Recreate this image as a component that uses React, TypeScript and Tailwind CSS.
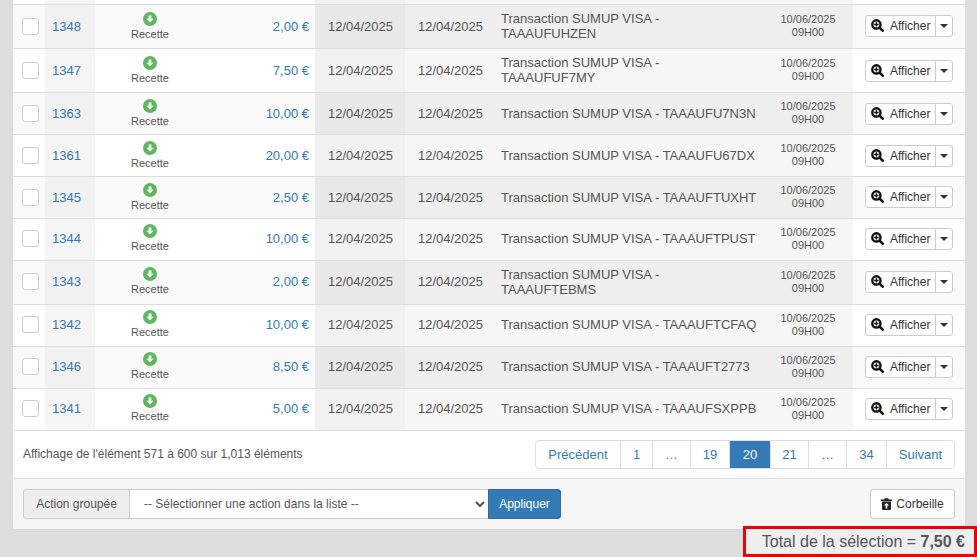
const rows = [
  { id: "1348", amount: "2,00 €", ref: "TAAAUFUHZEN", h: "h-[44px]", wrap: true },
  { id: "1347", amount: "7,50 €", ref: "TAAAUFUF7MY", h: "h-[44px]", wrap: true },
  { id: "1363", amount: "10,00 €", ref: "TAAAUFU7N3N", h: "h-[42px]", wrap: false },
  { id: "1361", amount: "20,00 €", ref: "TAAAUFU67DX", h: "h-[42px]", wrap: false },
  { id: "1345", amount: "2,50 €", ref: "TAAAUFTUXHT", h: "h-[42px]", wrap: false },
  { id: "1344", amount: "10,00 €", ref: "TAAAUFTPUST", h: "h-[42px]", wrap: false },
  { id: "1343", amount: "2,00 €", ref: "TAAAUFTEBMS", h: "h-[44px]", wrap: true },
  { id: "1342", amount: "10,00 €", ref: "TAAAUFTCFAQ", h: "h-[42px]", wrap: false },
  { id: "1346", amount: "8,50 €", ref: "TAAAUFT2773", h: "h-[42px]", wrap: false },
  { id: "1341", amount: "5,00 €", ref: "TAAAUFSXPPB", h: "h-[42px]", wrap: false },
];

const pages = [
  { t: "Précédent", w: "w-[86px]", c: "text-[#337ab7]" },
  { t: "1", w: "w-[33px]", c: "text-[#337ab7]" },
  { t: "…", w: "w-[39px]", c: "text-[#777777]" },
  { t: "19", w: "w-[40px]", c: "text-[#337ab7]" },
  { t: "20", w: "w-[42px]", c: "text-white bg-[#337ab7] border-[#337ab7]" },
  { t: "21", w: "w-[39px]", c: "text-[#337ab7]" },
  { t: "…", w: "w-[39px]", c: "text-[#777777]" },
  { t: "34", w: "w-[41px]", c: "text-[#337ab7]" },
  { t: "Suivant", w: "w-[69px]", c: "text-[#337ab7]" },
];

function SearchPlus() {
  return (
    <svg viewBox="0 0 13 13" className="h-[13px] w-[13px] shrink-0">
      <circle cx="5.4" cy="5.4" r="4.1" fill="#ffffff" stroke="#111111" strokeWidth="2.4" />
      <path d="M8.6 8.6 L11.7 11.7" stroke="#111111" strokeWidth="2.6" strokeLinecap="round" />
      <path d="M3.2 5.4 H7.6 M5.4 3.2 V7.6" stroke="#111111" strokeWidth="1.5" />
    </svg>
  );
}

function TrashUp() {
  return (
    <svg viewBox="0 0 11 12" className="h-[12px] w-[11px] shrink-0">
      <path d="M0 1.5 H3.2 L3.8 0.2 H7.2 L7.8 1.5 H11 V3 H0 Z" fill="#222222" />
      <path d="M1 3.6 H10 V11 Q10 12 9 12 H2 Q1 12 1 11 Z" fill="#222222" />
      <path d="M5.5 5 L8 7.6 H6.3 V10.4 H4.7 V7.6 H3 Z" fill="#ffffff" />
    </svg>
  );
}

function ArrowCircleDown() {
  return (
    <svg viewBox="0 0 14 14" className="mb-[2px] h-[14px] w-[14px] shrink-0">
      <circle cx="7" cy="7" r="7" fill="#5cb85c" />
      <path d="M5.6 3.4 H8.4 V6.8 H10.6 L7 10.6 L3.4 6.8 H5.6 Z" fill="#ffffff" />
    </svg>
  );
}

export default function App() {
  return (
    <div className="relative h-[557px] w-[977px] overflow-hidden bg-[#dddddd] font-['Liberation_Sans',Arial,sans-serif] text-[13px] text-[#555555]">
      <div className="ml-[13px] w-[952px] rounded-b-[3px] bg-white">
        <table className="w-[952px] table-fixed border-separate border-spacing-0">
          <colgroup>
            <col className="w-[32px]" />
            <col className="w-[50px]" />
            <col className="w-[110px]" />
            <col className="w-[110px]" />
            <col className="w-[90px]" />
            <col className="w-[90px]" />
            <col className="w-[268px]" />
            <col className="w-[90px]" />
            <col className="w-[112px]" />
          </colgroup>
          <tbody>
            <tr className="h-[5px] bg-white">
              <td className="border-b border-[#dddddd] p-0" />
              <td className="border-b border-[#dddddd] bg-[#f5f5f5] p-0" />
              <td colSpan={2} className="border-b border-[#dddddd] p-0" />
              <td className="border-b border-[#dddddd] bg-[#f1f1f1] p-0" />
              <td colSpan={3} className="border-b border-[#dddddd] bg-[#f6f6f6] p-0" />
              <td className="border-b border-[#dddddd] p-0" />
            </tr>
            {rows.map((r, i) => {
              const odd = i % 2 === 0;
              const up = i >= 5 ? "pb-[2px]" : "pb-0";
              const mid = odd ? "bg-[#eeeeee]" : "bg-[#f6f6f6]";
              return (
                <tr key={r.id} className={`${r.h} ${odd ? "bg-[#f9f9f9]" : "bg-white"}`}>
                  <td className={`border-b border-[#dddddd] pt-0 pr-0 pl-[9px] align-middle ${up}`}>
                    <div className="h-[17px] w-[17px] rounded-[3px] border border-[#cccccc] bg-white" />
                  </td>
                  <td className={`border-b border-[#dddddd] pt-0 pr-0 pl-[7px] align-middle text-[#337ab7] ${up} ${odd ? "bg-[#f1f1f1]" : "bg-[#f5f5f5]"}`}>
                    {r.id}
                  </td>
                  <td className={`border-b border-[#dddddd] p-0 text-center align-middle ${up}`}>
                    <div className="flex flex-col items-center text-[11px] leading-[13px]">
                      <ArrowCircleDown />
                      <span>Recette</span>
                    </div>
                  </td>
                  <td className={`border-b border-[#dddddd] pt-0 pl-0 pr-[6px] text-right align-middle text-[#337ab7] ${up}`}>
                    {r.amount}
                  </td>
                  <td className={`border-b border-[#dddddd] pt-0 pr-0 pl-[1px] text-center align-middle ${up} ${odd ? "bg-[#e8e8e8]" : "bg-[#f1f1f1]"}`}>
                    12/04/2025
                  </td>
                  <td className={`border-b border-[#dddddd] pt-0 pr-0 pl-[1px] text-center align-middle ${up} ${mid}`}>
                    12/04/2025
                  </td>
                  <td className={`border-b border-[#dddddd] pt-0 px-[6px] align-middle leading-[15px] ${r.wrap ? "pb-[2px]" : up} ${mid}`}>
                    Transaction SUMUP VISA -{" "}
                    {r.wrap && <br />}
                    {r.ref}
                  </td>
                  <td className={`border-b border-[#dddddd] px-0 pt-0 pb-[2px] text-center align-middle text-[11px] leading-[13px] ${mid}`}>
                    10/06/2025
                    <br />
                    09H00
                  </td>
                  <td className={`border-b border-[#dddddd] pt-0 pr-0 pl-[12px] align-middle ${i === 0 || i >= 4 ? "pb-[2px]" : "pb-0"}`}>
                    <div className="flex h-[22px] w-[88px] text-[12px] text-[#333333]">
                      <div className="flex w-[71px] items-center gap-[6px] rounded-l-[3px] border border-[#cccccc] bg-white pl-[5px]">
                        <SearchPlus />
                        <span>Afficher</span>
                      </div>
                      <div className="-ml-px flex flex-1 items-center justify-center rounded-r-[3px] border border-[#cccccc] bg-white">
                        <div className="h-0 w-0 border-x-[4px] border-t-[4px] border-x-transparent border-t-[#333333]" />
                      </div>
                    </div>
                  </td>
                </tr>
              );
            })}
          </tbody>
        </table>

        <div className="flex h-[48px] items-start justify-between border-b border-[#dddddd] pl-[10px] pr-[10px] pt-[9px]">
          <div className="pt-[6px] text-[12px] leading-[17px]">Affichage de l'élément 571 à 600 sur 1,013 éléments</div>
          <div className="flex h-[29px] rounded-[4px]">
            {pages.map((p, i) => (
              <div
                key={i}
                className={`flex items-center justify-center border border-[#dddddd] ${i === 0 ? "" : "-ml-px"} ${p.w} ${p.c} ${i === 0 ? "rounded-l-[4px]" : ""} ${i === pages.length - 1 ? "rounded-r-[4px]" : ""}`}
              >
                {p.t}
              </div>
            ))}
          </div>
        </div>

        <div className="flex h-[51px] items-start justify-between rounded-b-[3px] border-b border-[#d5d5d5] bg-[#f5f5f5] pl-[10px] pr-[10px] pt-[10px] text-[12px]">
          <div className="flex h-[30px]">
            <div className="flex w-[107px] items-center justify-center rounded-l-[3px] border border-[#cccccc] bg-[#eeeeee]">
              Action groupée
            </div>
            <select className="-ml-px h-[30px] w-[360px] border border-[#cccccc] bg-white pl-[10px] text-[12px] text-[#555555]">
              <option>-- Sélectionner une action dans la liste --</option>
            </select>
            <div className="-ml-px flex w-[73px] items-center justify-center rounded-r-[3px] border border-[#2e6da4] bg-[#337ab7] text-white">
              Appliquer
            </div>
          </div>
          <div className="flex h-[30px] w-[85px] items-center justify-center gap-[4px] rounded-[3px] border border-[#cccccc] bg-white text-[#333333]">
            <TrashUp />
            <span>Corbeille</span>
          </div>
        </div>
      </div>

      <div className="absolute bottom-0 right-0 flex h-[31px] w-[234px] items-center justify-end border-[3px] border-[#f00000] bg-[#eeeeee] pt-px pr-[9px] text-[16px]">
        <span>
          Total de la sélection = <b>7,50 €</b>
        </span>
      </div>
    </div>
  );
}
